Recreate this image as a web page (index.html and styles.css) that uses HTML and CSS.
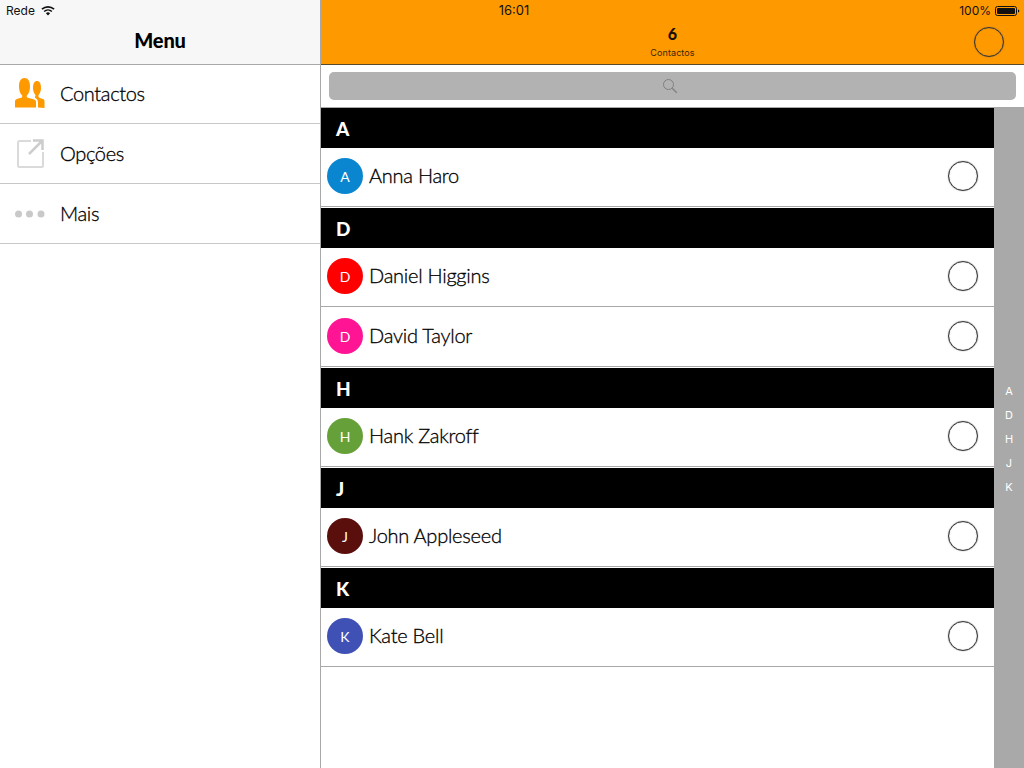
FILE: index.html
```html
<!DOCTYPE html>
<html lang="pt">
<head>
  <meta charset="UTF-8" />
  <title>Contactos</title>
  <link rel="stylesheet" href="styles.css">
</head>
<body>
  <div class="app">
    <aside class="sidebar">
      <header class="side-top">
        <div class="status-left">
          <span>Rede</span>
          <svg class="wifi" width="14" height="10" viewBox="0 0 14 10"><path d="M7 9.600 4.900 7.300a3 3 0 0 1 4.200 0zM3.700 6.100 2.600 4.900a6.400 6.400 0 0 1 8.800 0l-1.100 1.200a4.800 4.800 0 0 0-6.600 0zM1.500 3.800.4 2.600a9.700 9.700 0 0 1 13.200 0l-1.100 1.200a8.100 8.100 0 0 0-11 0z" fill="#111"/></svg>
        </div>
        <h1>Menu</h1>
      </header>
      <nav>
        <a class="menu-item">
          <svg class="menu-icon" width="32" height="32" viewBox="0 0 32 32"><path fill="#ff9900" d="M1 29.500v-6c0-1.500 1-2.300 2.500-2.700l3.700-1c.9-.3 1.200-1.200 1-2.300C6.300 15.500 5 13 5 8.500 5 3 7 0 10.500 0S16 3 16 8.500c0 4.500-1.300 7-3.200 9-.2 1.100.1 2 1 2.300l5.700 1.500c1.600.4 2.500 1.200 2.500 2.700v5.500z"/><path fill="#ff9900" d="M24 29.500v-5.500c0-2-1.300-3.300-3-4.300-.2-1 .3-1.800.6-2.500C20 15.500 19 13 19 10c0-4.500 1.500-7 4-7s4 2.500 4 7c0 3-1 5.500-2.500 7.300-.2 1.300.3 2.200 1.400 2.600l3 1c1.200.4 1.600 1.200 1.600 2.300v6.800z"/></svg>
          <span>Contactos</span>
        </a>
        <a class="menu-item">
          <svg class="menu-icon" width="32" height="32" viewBox="0 0 32 32"><path fill="none" stroke="#dadada" stroke-width="2" d="M17 3H5.500A1.500 1.500 0 0 0 4 4.500v23A1.500 1.500 0 0 0 5.500 29h22a1.500 1.500 0 0 0 1.500-1.500V14"/><path fill="none" stroke="#cdcdcd" stroke-width="2.500" d="M15 16 28 3M19 2.500h9.500V12"/></svg>
          <span>Opções</span>
        </a>
        <a class="menu-item">
          <svg class="menu-icon" width="32" height="32" viewBox="0 0 32 32"><circle cx="4.500" cy="16" r="3.500" fill="#c9c9c9"/><circle cx="15.500" cy="16" r="3.500" fill="#c9c9c9"/><circle cx="27" cy="16" r="3.500" fill="#c9c9c9"/></svg>
          <span>Mais</span>
        </a>
      </nav>
    </aside>
    <main class="content">
      <header class="top-bar">
        <div class="status-bar">
          <span class="clock">16:01</span>
          <div class="battery-wrap">
            <span>100%</span>
            <svg width="25" height="10" viewBox="0 0 25 10"><rect x=".5" y=".5" width="21" height="9" rx="2" fill="none" stroke="#111"/><rect x="2" y="2" width="18" height="6" rx="1" fill="#111"/><path d="M23 3.500c.8.200 1.300.700 1.300 1.500s-.5 1.300-1.300 1.500z" fill="#111"/></svg>
          </div>
        </div>
        <div class="title-block">
          <strong>6</strong>
          <small>Contactos</small>
        </div>
        <span class="check top-check"></span>
      </header>
      <div class="search-wrap">
        <div class="search-box">
          <svg width="16" height="16" viewBox="0 0 16 16"><circle cx="6.500" cy="6.500" r="5" fill="none" stroke="#808080" stroke-width="1"/><path d="m10.200 10.200 4.600 4.600" stroke="#808080" stroke-width="1.300"/></svg>
        </div>
      </div>
      <div class="list-area">
        <div class="list">
          <section>
            <h2>A</h2>
            <div class="row"><span class="avatar blue">A</span><span class="name">Anna Haro</span><span class="check"></span></div>
          </section>
          <section>
            <h2>D</h2>
            <div class="row"><span class="avatar red">D</span><span class="name">Daniel Higgins</span><span class="check"></span></div>
            <div class="row"><span class="avatar pink">D</span><span class="name">David Taylor</span><span class="check"></span></div>
          </section>
          <section>
            <h2>H</h2>
            <div class="row"><span class="avatar green">H</span><span class="name">Hank Zakroff</span><span class="check"></span></div>
          </section>
          <section>
            <h2>J</h2>
            <div class="row"><span class="avatar brown">J</span><span class="name">John Appleseed</span><span class="check"></span></div>
          </section>
          <section>
            <h2>K</h2>
            <div class="row"><span class="avatar indigo">K</span><span class="name">Kate Bell</span><span class="check"></span></div>
          </section>
        </div>
        <div class="index-bar">
          <span>A</span><span>D</span><span>H</span><span>J</span><span>K</span>
        </div>
      </div>
    </main>
  </div>
</body>
</html>
```
FILE: styles.css
```css
* { box-sizing: border-box; }
html, body { height: 100%; }
body {
  margin: 0;
  font-family: 'Lato', 'Liberation Sans', sans-serif;
  color: #000;
  background: #fff;
  overflow: hidden;
}
.app {
  display: flex;
  height: 768px;
}

/* left menu */
.sidebar {
  width: 321px;
  flex: none;
  border-right: 1px solid #a8a8a8;
}
.side-top {
  height: 65px;
  background: #f7f7f7;
  border-bottom: 1px solid #a8a8a8;
  display: flex;
  flex-direction: column;
}
.status-left {
  height: 20px;
  padding: 2px 0 0 6px;
  display: flex;
  align-items: center;
  gap: 6px;
  font-family: 'Inter', sans-serif;
  font-size: 12px;
  line-height: 14px;
  color: #111;
}
.side-top h1 {
  margin: 0;
  font-size: 20px;
  line-height: 24px;
  padding-top: 8px;
  font-weight: 900;
  letter-spacing: -.2px;
  text-align: center;
}
.menu-item {
  height: 60px;
  padding: 0 0 2px 14px;
  display: flex;
  align-items: center;
  gap: 14px;
  border-bottom: 1px solid #c8c8c8;
  font-size: 20px;
  font-weight: 300;
  -webkit-text-stroke: .3px #000;
  letter-spacing: -.35px;
  color: #000;
}
.menu-item:first-child { height: 59px; }
.menu-icon { flex: none; margin-top: 2px; }

/* right side */
.content {
  flex: 1;
  display: flex;
  flex-direction: column;
  min-width: 0;
}
.top-bar {
  height: 65px;
  background: #ff9900;
  border-bottom: 1px solid #5a4a2a;
  position: relative;
  text-align: center;
}
.status-bar {
  height: 20px;
  padding-right: 317px;
  font-family: 'Inter', sans-serif;
  font-size: 12px;
  line-height: 21px;
  color: #111;
  text-align: center;
}
.clock { font-size: 13px; }
.battery-wrap {
  position: absolute;
  top: 0;
  right: 4px;
  display: flex;
  align-items: center;
  gap: 4px;
  height: 21px;
}
.title-block {
  display: flex;
  flex-direction: column;
  align-items: center;
  padding-top: 5px;
}
.title-block strong {
  font-size: 16px;
  line-height: 18px;
  font-weight: 900;
  color: #1a1000;
}
.title-block small {
  font-family: 'Inter', sans-serif;
  font-size: 9px;
  line-height: 12px;
  margin-top: 4px;
  letter-spacing: .1px;
  color: #3a2600;
}
.top-check {
  position: absolute;
  right: 20px;
  top: 27px;
  border-color: #4a3208;
}
.search-wrap {
  height: 43px;
  padding: 7px 8px 0;
  border-bottom: 1px solid #a8a8a8;
}
.search-box {
  height: 28px;
  padding: 0 5px 1px 0;
  background: #b2b2b2;
  border-radius: 5px;
  display: flex;
  align-items: center;
  justify-content: center;
}
.list-area {
  flex: 1;
  display: flex;
  min-height: 0;
}
.list { flex: 1; min-width: 0; }
section h2 {
  margin: 0;
  height: 40px;
  background: #000;
  color: #fff;
  font-size: 19px;
  font-weight: 900;
  line-height: 42px;
  padding-left: 15px;
}
.row {
  height: 60px;
  padding: 0 16px 4px 6px;
  display: flex;
  align-items: center;
  position: relative;
}
.row::after {
  content: "";
  position: absolute;
  left: 0;
  right: 0;
  bottom: 1px;
  height: 1px;
  background: #a8a8a8;
}
.avatar {
  width: 36px;
  height: 36px;
  border-radius: 50%;
  flex: none;
  display: flex;
  align-items: center;
  justify-content: center;
  color: #fff;
  font-size: 14px;
}
.blue { background: #0a86d0; }
.red { background: #ff0000; }
.pink { background: #ff1493; }
.green { background: #66a038; }
.brown { background: #5a0f0c; }
.indigo { background: #3f51b5; }
.name {
  flex: 1;
  margin: 0 0 2px 6px;
  font-size: 20px;
  font-weight: 300;
  -webkit-text-stroke: .3px #000;
  letter-spacing: -.25px;
  color: #000;
}
.check {
  display: block;
  width: 30px;
  height: 30px;
  flex: none;
  border: 1px solid #333;
  box-shadow: 0 0 1px #555, inset 0 0 1px #555;
  border-radius: 50%;
}
.index-bar {
  width: 30px;
  flex: none;
  background: #a9a9a9;
  display: flex;
  flex-direction: column;
  justify-content: center;
  align-items: center;
  color: #fff;
  font-family: 'Inter', sans-serif;
  font-size: 11px;
  padding-top: 2px;
}
.index-bar span {
  height: 24px;
  line-height: 24px;
}
```
